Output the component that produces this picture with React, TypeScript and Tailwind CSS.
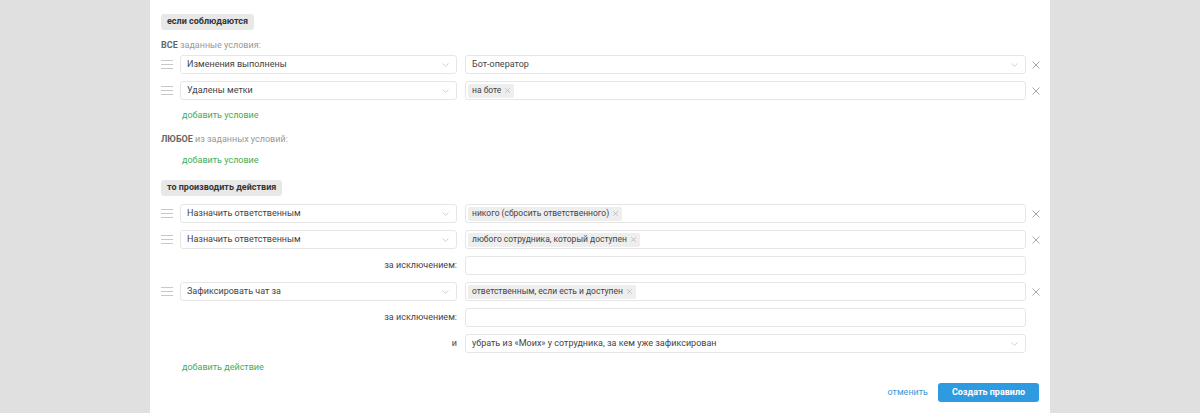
import React from "react";

const font = { fontFamily: "Roboto, 'Noto Sans', sans-serif" };

function Handle() {
    return (
        <div className="w-[20px] h-[19px] flex items-center pl-[1px]">
            <svg width="12" height="9" viewBox="0 0 12 9">
                <rect x="0" y="0" width="12" height="1" fill="#c8c8c8" />
                <rect x="0" y="4" width="12" height="1" fill="#c8c8c8" />
                <rect x="0" y="8" width="12" height="1" fill="#c8c8c8" />
            </svg>
        </div>
    );
}

function Chevron() {
    return (
        <svg width="7" height="4" viewBox="0 0 7 4" className="shrink-0">
            <path d="M0.5 0.5 L3.5 3.3 L6.5 0.5" fill="none" stroke="#cccccc" strokeWidth="0.9" />
        </svg>
    );
}

function Select({ text, className = "" }: { text: string; className?: string }) {
    return (
        <div className={`h-[19px] border border-[#e6e6e6] rounded-[3px] flex items-center pl-[6px] pr-[7px] text-[9px] text-[#444] bg-white ${className}`}>
            <span className="flex-1 truncate">{text}</span>
            <Chevron />
        </div>
    );
}

function Tag({ text }: { text: string }) {
    return (
        <span className="h-[14px] bg-[#eeeeee] rounded-[2px] pl-[4px] pr-[4px] flex items-center gap-[4px] text-[8.5px] text-[#444]">
            {text}
            <svg width="5" height="5" viewBox="0 0 5 5">
                <path d="M0.3 0.3 L4.7 4.7 M4.7 0.3 L0.3 4.7" stroke="#b4b4b4" strokeWidth="0.8" />
            </svg>
        </span>
    );
}

function TagBox({ tags }: { tags: string[] }) {
    return (
        <div className="flex-1 h-[19px] border border-[#e6e6e6] rounded-[3px] flex items-center px-[2px] gap-1 bg-white">
            {tags.map((t) => (
                <Tag key={t} text={t} />
            ))}
        </div>
    );
}

function Close() {
    return (
        <div className="w-[9px] ml-[5px] h-[19px] flex items-center justify-center">
            <svg width="8" height="8" viewBox="0 0 8 8">
                <path d="M0.5 0.5 L7.5 7.5 M7.5 0.5 L0.5 7.5" stroke="#a8a8a8" strokeWidth="1" />
            </svg>
        </div>
    );
}

function Row({ left, right }: { left: string; right: React.ReactNode }) {
    return (
        <div className="flex items-center">
            <Handle />
            <Select text={left} className="w-[277px]" />
            <div className="w-[8px]" />
            {right}
            <Close />
        </div>
    );
}

function SubRow({ label, children }: { label: string; children: React.ReactNode }) {
    return (
        <div className="flex items-center pr-[14px]">
            <div className="w-[305px] pr-[8px] text-right text-[9px] text-[#444]">{label}</div>
            {children}
        </div>
    );
}

function Badge({ text }: { text: string }) {
    return (
        <div className="ml-[1px] flex w-fit h-[16px] items-center px-[6px] rounded-[3px] bg-[#e8e8e8] text-[9px] font-bold text-[#333]">
            {text}
        </div>
    );
}

function AddLink({ text }: { text: string }) {
    return <div className="ml-[22px] leading-[14px] text-[9px] text-[#43ad57]">{text}</div>;
}

export default function App() {
    return (
        <div className="min-h-screen bg-[#e0e0e0]" style={font}>
            <div className="mx-auto w-[900px] min-h-screen bg-white pl-[10px] pr-[10px] pt-[14px]">
                <Badge text="если соблюдаются" />

                <div className="mt-[8px] ml-[1px] leading-[14px] text-[9px] text-[#999]">
                    <span className="font-bold text-[#666]">ВСЕ</span> заданные условия:
                </div>

                <div className="mt-[3px] flex flex-col gap-[7px]">
                    <Row left="Изменения выполнены" right={<Select text="Бот-оператор" className="flex-1" />} />
                    <Row left="Удалены метки" right={<TagBox tags={["на боте"]} />} />
                </div>

                <div className="mt-[8px]">
                    <AddLink text="добавить условие" />
                </div>

                <div className="mt-[10px] ml-[1px] leading-[14px] text-[9px] text-[#999]">
                    <span className="font-bold text-[#666]">ЛЮБОЕ</span> из заданных условий:
                </div>

                <div className="mt-[7px]">
                    <AddLink text="добавить условие" />
                </div>

                <div className="mt-[13px]">
                    <Badge text="то производить действия" />
                </div>

                <div className="mt-[8px] flex flex-col gap-[7px]">
                    <Row left="Назначить ответственным" right={<TagBox tags={["никого (сбросить ответственного)"]} />} />
                    <Row left="Назначить ответственным" right={<TagBox tags={["любого сотрудника, который доступен"]} />} />
                    <SubRow label="за исключением:">
                        <div className="flex-1 h-[19px] border border-[#e6e6e6] rounded-[3px]" />
                    </SubRow>
                    <Row left="Зафиксировать чат за" right={<TagBox tags={["ответственным, если есть и доступен"]} />} />
                    <SubRow label="за исключением:">
                        <div className="flex-1 h-[19px] border border-[#e6e6e6] rounded-[3px]" />
                    </SubRow>
                    <SubRow label="и">
                        <Select text="убрать из «Моих» у сотрудника, за кем уже зафиксирован" className="flex-1" />
                    </SubRow>
                </div>

                <div className="mt-[7px]">
                    <AddLink text="добавить действие" />
                </div>

                <div className="mt-[9px] flex items-center justify-end gap-[10px] pr-[1px]">
                    <span className="text-[9px] text-[#3d98d6]">отменить</span>
                    <button className="w-[101px] h-[19px] rounded-[3px] bg-[#2e9be0] text-white text-[9px] font-bold">
                        Создать правило
                    </button>
                </div>
            </div>
        </div>
    );
}
